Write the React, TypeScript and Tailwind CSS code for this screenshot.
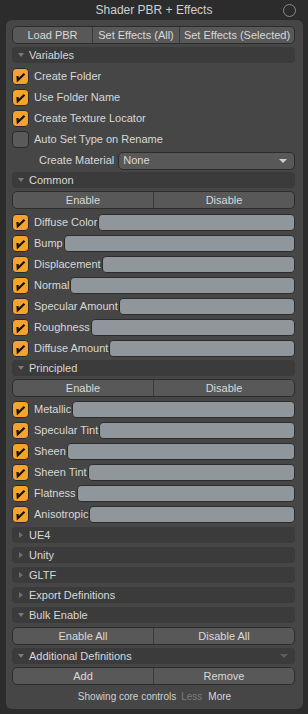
import React from 'react';

const font = { fontFamily: '"Liberation Sans", Arial, sans-serif' };

function Check() {
  return (
    <div className="flex h-[17px] w-[17px] shrink-0 items-center justify-center rounded-[4px] border border-[#2a2a2a] bg-[#f5a32a]">
      <svg width="15" height="15" viewBox="0 0 15 15">
        <path d="M4.5 7 L4.8 11.2 L11.5 4.8" fill="none" stroke="#111" strokeWidth="2.2" strokeLinejoin="miter" />
      </svg>
    </div>
  );
}

function Box() {
  return <div className="h-[17px] w-[17px] shrink-0 rounded-[4px] border border-[#2a2a2a] bg-[#5a5a5a]" />;
}

function Header({ title, open, mt, menu }: { title: string; open?: boolean; mt: string; menu?: boolean }) {
  return (
    <div className={`flex h-[16px] items-center rounded-[4px] bg-[#3b3b3b] pl-[4px] pr-[6px] ${mt}`}>
      <svg width="10" height="10" viewBox="0 0 10 10" className="mr-[3px]">
        {open ? <path d="M2 3 H8 L5 7 Z" fill="#7a7a7a" /> : <path d="M3 2 V8 L7 5 Z" fill="#6e6e6e" />}
      </svg>
      <span className="text-[11px] text-[#d8d8d8]">{title}</span>
      {menu && (
        <svg width="10" height="10" viewBox="0 0 10 10" className="ml-auto">
          <path d="M1 3 H9 L5 7 Z" fill="#5e5e5e" />
        </svg>
      )}
    </div>
  );
}

function Buttons({ labels, mt, widths }: { labels: string[]; mt: string; widths?: string[] }) {
  return (
    <div className={`flex h-[18px] overflow-hidden rounded-[5px] border border-[#2c2c2c] bg-[#585858] ${mt}`}>
      {labels.map((l, i) => (
        <div
          key={l}
          className={`flex items-center justify-center text-[11px] text-[#d8d8d8] ${widths ? widths[i] : 'flex-1'} ${i > 0 ? 'border-l border-[#3a3a3a]' : ''}`}
        >
          {l}
        </div>
      ))}
    </div>
  );
}

function FieldRow({ label }: { label: string }) {
  return (
    <div className="flex h-[21px] items-center">
      <Check />
      <span className="ml-[5px] mr-[1px] whitespace-nowrap text-[11px] text-[#d8d8d8]">{label}</span>
      <div className="h-[17px] flex-1 rounded-[4px] border border-[#2c2c2c] bg-[#8f969c]" />
    </div>
  );
}

function CheckRow({ label, on = true }: { label: string; on?: boolean }) {
  return (
    <div className="flex h-[21px] items-center">
      {on ? <Check /> : <Box />}
      <span className="ml-[5px] text-[11px] text-[#d8d8d8]">{label}</span>
    </div>
  );
}

const common = ['Diffuse Color', 'Bump', 'Displacement', 'Normal', 'Specular Amount', 'Roughness', 'Diffuse Amount'];
const principled = ['Metallic', 'Specular Tint', 'Sheen', 'Sheen Tint', 'Flatness', 'Anisotropic'];

export default function App() {
  return (
    <div className="flex h-[714px] w-[308px] flex-col bg-[#2c2c2c]" style={font}>
      <div className="relative flex h-[20px] shrink-0 items-center justify-center">
        <span className="text-[12px] text-[#d0d0d0]">Shader PBR + Effects</span>
        <div className="absolute right-[12px] top-[4px] h-[13px] w-[13px] rounded-full border-[1.5px] border-[#8a8a8a]" />
      </div>
      <div className="mb-[5px] ml-[6px] mr-[5px] flex flex-1 flex-col rounded-[6px] bg-[#464646] pl-[6px] pr-[8px] pt-[6px]">
        <Buttons labels={['Load PBR', 'Set Effects (All)', 'Set Effects (Selected)']} mt="" widths={['w-[79px]', 'w-[87px]', 'flex-1']} />
        <Header title="Variables" open mt="mt-[3px]" />
        <div className="mt-[3px] flex flex-col">
          <CheckRow label="Create Folder" />
          <CheckRow label="Use Folder Name" />
          <CheckRow label="Create Texture Locator" />
          <CheckRow label="Auto Set Type on Rename" on={false} />
          <div className="flex h-[21px] items-center pl-[27px]">
            <span className="mr-[4px] text-[11px] text-[#d8d8d8]">Create Material</span>
            <div className="flex h-[18px] flex-1 items-center rounded-[5px] border border-[#2c2c2c] bg-[#585858] pl-[4px] pr-[6px]">
              <span className="text-[11px] text-[#d8d8d8]">None</span>
              <svg width="10" height="8" viewBox="0 0 10 8" className="ml-auto">
                <path d="M1 2 H9 L5 6 Z" fill="#d0d0d0" />
              </svg>
            </div>
          </div>
        </div>
        <Header title="Common" open mt="mt-[1px]" />
        <Buttons labels={['Enable', 'Disable']} mt="mt-[3px]" />
        <div className="mt-[3px] flex flex-col">
          {common.map((l) => (
            <FieldRow key={l} label={l} />
          ))}
        </div>
        <Header title="Principled" open mt="mt-[1px]" />
        <Buttons labels={['Enable', 'Disable']} mt="mt-[3px]" />
        <div className="mt-[2px] flex flex-col">
          {principled.map((l) => (
            <FieldRow key={l} label={l} />
          ))}
        </div>
        <Header title="UE4" mt="mt-[2px]" />
        <Header title="Unity" mt="mt-[4px]" />
        <Header title="GLTF" mt="mt-[4px]" />
        <Header title="Export Definitions" mt="mt-[4px]" />
        <Header title="Bulk Enable" open mt="mt-[4px]" />
        <Buttons labels={['Enable All', 'Disable All']} mt="mt-[4px]" />
        <Header title="Additional Definitions" open menu mt="mt-[3px]" />
        <Buttons labels={['Add', 'Remove']} mt="mt-[3px]" />
        <div className="mt-[4px] flex h-[14px] items-center justify-center pl-[2px]">
          <span className="text-[10px] text-[#d0d0d0]">Showing core controls</span>
          <span className="ml-[5px] text-[10px] text-[#7c7c7c]">Less</span>
          <span className="ml-[6px] text-[10px] text-[#d8d8d8]">More</span>
        </div>
      </div>
    </div>
  );
}
